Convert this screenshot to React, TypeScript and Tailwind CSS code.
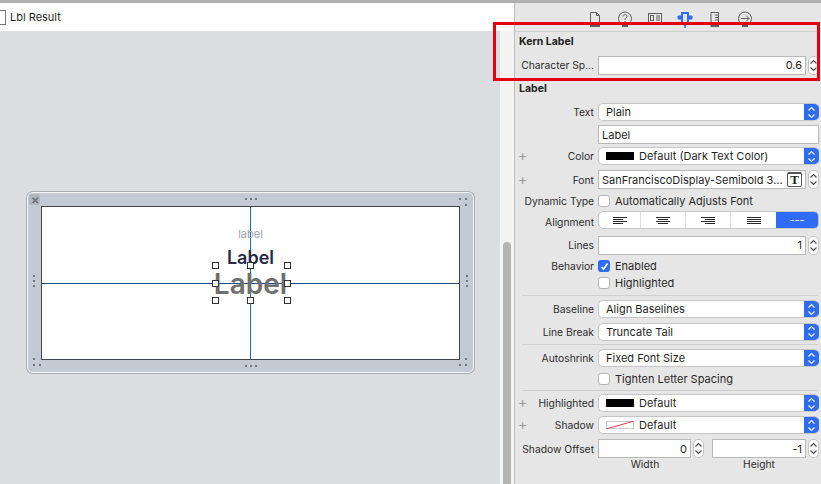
import type { ReactNode } from 'react';

function Chevrons({ color = '#4a4a4a' }: { color?: string }) {
  return (
    <svg width="9" height="15" viewBox="0 0 9 15" fill="none" stroke={color} strokeWidth="1.2">
      <path d="M1.5 5.5 L4.5 2.5 L7.5 5.5" />
      <path d="M1.5 9.5 L4.5 12.5 L7.5 9.5" />
    </svg>
  );
}

function Stepper() {
  return (
    <div className="ml-[2px] flex h-[19px] w-[11px] shrink-0 items-center justify-center rounded-[5px] border border-[#c4c4c4] bg-white">
      <Chevrons />
    </div>
  );
}

function Row({ label, plus, h, labelClass, children }: { label?: string; plus?: boolean; h: number; labelClass?: string; children?: ReactNode }) {
  return (
    <div className="flex items-center pr-[2px]" style={{ height: h }}>
      <div className={`relative w-[79px] shrink-0 whitespace-nowrap text-right text-[10.3px] text-[#2e2e2e] ${labelClass ?? ''}`}>
        {plus && <span className="absolute left-[3px] top-[-2px] text-[14px] leading-[16px] text-[#9a9a9a]">+</span>}
        {label}
      </div>
      <div className="ml-[4px] flex min-w-0 flex-1 items-center">{children}</div>
    </div>
  );
}

function Popup({ children }: { children: ReactNode }) {
  return (
    <div className="flex h-[18px] flex-1 items-center overflow-hidden rounded-[5px] border-t border-b border-l border-[#c6c6c6] bg-white pl-[7px] text-[#1f1f1f]">
      <div className="flex flex-1 items-center gap-[5px] whitespace-nowrap">{children}</div>
      <div className="flex h-[18px] w-[15px] items-center justify-center bg-[#2f6cf6]">
        <Chevrons color="#ffffff" />
      </div>
    </div>
  );
}

function Field({ children, right, className = 'flex-1' }: { children?: ReactNode; right?: boolean; className?: string }) {
  return (
    <div
      className={`flex h-[19px] items-center border border-[#b9b9b9] bg-white px-[3px] text-[#1f1f1f] ${
        right ? 'justify-end' : ''
      } ${className}`}
    >
      {children}
    </div>
  );
}

function Check({ on, label }: { on?: boolean; label: string }) {
  return (
    <div className="flex items-center gap-[5px] whitespace-nowrap text-[#2a2a2a]">
      {on ? (
        <div className="flex h-[12px] w-[12px] items-center justify-center rounded-[3px] bg-[#2f6cf6]">
          <svg width="9" height="9" viewBox="0 0 9 9" fill="none" stroke="white" strokeWidth="1.6">
            <path d="M1.5 5 L3.6 7.2 L7.5 1.5" />
          </svg>
        </div>
      ) : (
        <div className="h-[12px] w-[12px] rounded-[3px] border border-[#b5b5b5] bg-white" />
      )}
      {label}
    </div>
  );
}

function Sep() {
  return <div className="ml-[7px] mr-[3px] h-px shrink-0 bg-[#cfcfcf]" />;
}

function AlignIcon({ mode }: { mode: 'left' | 'center' | 'right' | 'justify' }) {
  const short = { left: 'M0 ', center: 'M2 ', right: 'M4 ', justify: 'M0 ' }[mode];
  const len = mode === 'justify' ? 14 : 10;
  return (
    <svg width="14" height="7" viewBox="0 0 14 7" stroke="#2a2a2a" strokeWidth="1">
      <path d="M0 0.5 H14" />
      <path d={`${short}2.5 h${len}`} />
      <path d="M0 4.5 H14" />
      <path d={`${short}6.5 h${len}`} />
    </svg>
  );
}

function InspectorTabs() {
  const stroke = '#5f5f5f';
  return (
    <div className="flex h-[28px] items-start justify-center gap-[14px] pl-[3px] pt-[7px]">
      <svg width="16" height="19" viewBox="0 0 16 19" fill="none" stroke={stroke}>
        <path d="M3.5 15 V2.5 H9.5 L12.5 5.5 V15 M9.5 2.5 V5.5 H12.5" />
        <path d="M3 16 H13" strokeWidth="2" />
      </svg>
      <svg width="16" height="19" viewBox="0 0 16 19" fill="none" stroke={stroke}>
        <circle cx="8" cy="8.5" r="6.5" />
        <path d="M6 6.5 C6 4 10 4 10 6.5 C10 8 8 8 8 10 M8 11 V12.5" />
        <path d="M5 16 H11" strokeWidth="2" />
      </svg>
      <svg width="16" height="19" viewBox="0 0 16 19" fill="none" stroke={stroke}>
        <rect x="1.5" y="3.5" width="13" height="9" />
        <rect x="3.5" y="5.5" width="3" height="5" />
        <path d="M9 6 H13 M9 8 H13 M9 10 H13" />
      </svg>
      <svg width="16" height="19" viewBox="0 0 16 19" fill="none" stroke="#2f6cf6" strokeWidth="2">
        <path d="M5 3 H11 V12 L8 15 L5 12 Z" />
        <path d="M1 6 H5 V9 H1 Z M11 6 H15 V9 H11 Z" fill="#2f6cf6" strokeWidth="1" />
        <path d="M8 16 V18" strokeWidth="1.5" />
      </svg>
      <svg width="16" height="19" viewBox="0 0 16 19" fill="none" stroke={stroke}>
        <path d="M4 2.5 H11.5 V15 H4 Z M8 5 H11.5 M8 7.5 H11.5 M8 10 H11.5" />
        <path d="M3.5 16 H12" strokeWidth="2" />
      </svg>
      <svg width="16" height="19" viewBox="0 0 16 19" fill="none" stroke={stroke}>
        <circle cx="8" cy="8.5" r="6.5" />
        <path d="M4 8.5 H12 M9 5.5 L12 8.5 L9 11.5" />
        <path d="M5 16 H11" strokeWidth="2" />
      </svg>
    </div>
  );
}

function Inspector() {
  return (
    <div className="flex w-[306px] shrink-0 flex-col bg-[#e6e6e6] text-[11px] leading-[14px]">
      <InspectorTabs />
      <div className="h-px shrink-0 bg-[#cdcdcd]" />
      <div className="flex h-[20px] shrink-0 items-center pl-[4px] text-[10.5px] font-bold text-[#222]">Kern Label</div>
      <Row label="Character Sp..." h={26}>
        <Field right>0.6</Field>
        <Stepper />
      </Row>
      <div className="flex h-[22px] shrink-0 items-center pl-[4px] text-[10.5px] font-bold text-[#222]">Label</div>
      <Row label="Text" h={24}>
        <Popup>Plain</Popup>
      </Row>
      <Row h={21}>
        <Field>Label</Field>
      </Row>
      <Row label="Color" plus h={22}>
        <Popup>
          <span className="h-[8px] w-[28px] bg-black" />
          Default (Dark Text Color)
        </Popup>
      </Row>
      <Row label="Font" plus h={25}>
        <Field className="flex-1 justify-between">
          <span className="whitespace-nowrap">SanFranciscoDisplay-Semibold 3...</span>
          <span className="flex h-[15px] w-[15px] items-center justify-center rounded-[2px] border border-t-2 border-[#555] font-['Liberation_Serif',serif] text-[13px] font-bold">
            T
          </span>
        </Field>
        <Stepper />
      </Row>
      <Row label="Dynamic Type" h={18}>
        <Check label="Automatically Adjusts Font" />
      </Row>
      <Row label="Alignment" labelClass="translate-y-[2px]" h={20}>
        <div className="flex h-[18px] flex-1 overflow-hidden rounded-[5px] border border-[#c6c6c6] bg-white">
          <div className="flex w-[42px] items-center justify-center border-r border-[#ddd]"><AlignIcon mode="left" /></div>
          <div className="flex w-[45px] items-center justify-center border-r border-[#ddd]"><AlignIcon mode="center" /></div>
          <div className="flex w-[45px] items-center justify-center border-r border-[#ddd]"><AlignIcon mode="right" /></div>
          <div className="flex w-[45px] items-center justify-center"><AlignIcon mode="justify" /></div>
          <div className="flex flex-1 items-center justify-center bg-[#2f6cf6] text-white">---</div>
        </div>
      </Row>
      <Row label="Lines" h={30}>
        <Field right>1</Field>
        <Stepper />
      </Row>
      <Row label="Behavior" h={12}>
        <Check on label="Enabled" />
      </Row>
      <Row h={22}>
        <Check label="Highlighted" />
      </Row>
      <div className="h-px shrink-0" />
      <Sep />
      <div className="h-[2px] shrink-0" />
      <Row label="Baseline" h={22}>
        <Popup>Align Baselines</Popup>
      </Row>
      <Row label="Line Break" h={23}>
        <Popup>Truncate Tail</Popup>
      </Row>
      <div className="h-px shrink-0" />
      <Sep />
      <Row label="Autoshrink" h={26}>
        <Popup>Fixed Font Size</Popup>
      </Row>
      <Row h={16}>
        <Check label="Tighten Letter Spacing" />
      </Row>
      <div className="h-[3px] shrink-0" />
      <Sep />
      <div className="h-px shrink-0" />
      <Row label="Highlighted" plus h={22}>
        <Popup>
          <span className="h-[8px] w-[28px] bg-black" />
          Default
        </Popup>
      </Row>
      <Row label="Shadow" plus h={22}>
        <Popup>
          <svg width="28" height="8" viewBox="0 0 28 8" className="bg-white">
            <rect x="0.5" y="0.5" width="27" height="7" fill="none" stroke="#ccc" />
            <path d="M0 8 L28 0" stroke="#e8394a" />
          </svg>
          Default
        </Popup>
      </Row>
      <Row label="Shadow Offset" h={25}>
        <Field right className="w-[93px]">0</Field>
        <Stepper />
        <div className="w-[8px]" />
        <Field right className="flex-1">-1</Field>
        <Stepper />
      </Row>
      <div className="-mt-[4px] flex pl-[83px] text-[10.3px] text-[#2e2e2e]">
        <span className="w-[94px] text-center">Width</span>
        <span className="ml-[20px] w-[94px] text-center">Height</span>
      </div>
    </div>
  );
}

function Grip({ vertical }: { vertical?: boolean }) {
  return (
    <div className={`flex gap-[3px] ${vertical ? 'flex-col' : ''}`}>
      <span className="h-[2px] w-[2px] bg-[#6f7780]" />
      <span className="h-[2px] w-[2px] bg-[#6f7780]" />
      <span className="h-[2px] w-[2px] bg-[#6f7780]" />
    </div>
  );
}

// three dots in an L, the gap cell faces the inside of the frame
function Corner({ className, gap }: { className: string; gap: number }) {
  return (
    <div className={`absolute grid grid-cols-2 gap-[4px] ${className}`}>
      {[0, 1, 2, 3].map((i) => (
        <span key={i} className={`h-[2px] w-[2px] ${i === gap ? '' : 'bg-[#6f7780]'}`} />
      ))}
    </div>
  );
}

function Handle({ x, y }: { x: number; y: number }) {
  return <div className="absolute h-[7px] w-[7px] border border-[#333] bg-white" style={{ left: x, top: y }} />;
}

function Canvas() {
  const handles = [
    [170, 55], [205, 55], [242, 55],
    [170, 73], [242, 73],
    [170, 90], [205, 90], [242, 90],
  ];
  return (
    <div className="flex min-h-0 flex-1 bg-[#dcdde0] pl-[27px] pt-[161px]">
      {/* device frame */}
      <div className="relative h-[181px] w-[447px] rounded-[6px] border border-[#f4f5f6] bg-[#c3cad3] p-[13px] shadow-[0_0_0_1px_#a8adb4]">
        <div className="relative h-[154px] w-[419px] overflow-hidden border border-[#3f4650] bg-white">
          <div className="absolute left-0 right-0 top-[76px] h-px bg-[#1d4f86]" />
          <div className="absolute bottom-0 left-[208px] top-0 w-px bg-[#1d6fb8]" />
          <div className="absolute left-0 right-0 top-[20px] text-center text-[11px] leading-[14px] text-[#a0a4b0]">label</div>
          <div className="absolute left-0 right-0 top-[40px] text-center text-[18px] font-semibold leading-[22px] text-[#262b47]">Label</div>
          <div className="absolute left-0 right-0 top-[59px] text-center text-[28px] font-semibold leading-[37px] text-[#6f6f6f]">Label</div>
          {handles.map(([x, y]) => (
            <Handle key={`${x}-${y}`} x={x} y={y} />
          ))}
        </div>
        <div className="absolute left-[1px] top-[1px] flex h-[11px] w-[11px] items-center justify-center rounded-[2px] bg-[#b0b6be] text-[10px] font-bold leading-none text-[#6a7079]">✕</div>
        <div className="absolute left-[217px] top-[5px]"><Grip /></div>
        <div className="absolute bottom-[5px] left-[217px]"><Grip /></div>
        <div className="absolute left-[5px] top-[82px]"><Grip vertical /></div>
        <div className="absolute right-[5px] top-[82px]"><Grip vertical /></div>
        <Corner gap={2} className="right-[6px] top-[5px]" />
        <Corner gap={1} className="bottom-[6px] left-[5px]" />
        <Corner gap={0} className="bottom-[6px] right-[6px]" />
      </div>
    </div>
  );
}

export default function App() {
  return (
    <div className="relative flex h-[484px] w-[821px] flex-col overflow-hidden bg-white font-['Inter',sans-serif] text-[11px]">
      <div className="h-[3px] shrink-0 bg-[#b0b0b0]" />
      <div className="flex min-h-0 flex-1">
        <div className="flex w-[514px] shrink-0 flex-col">
          <div className="flex h-[28px] shrink-0 items-center bg-white">
            <div className="h-[15px] w-[6px] border border-l-0 border-[#777]" />
            <span className="ml-[4px] pt-px text-[11px] text-[#1f1f1f]">Lbl Result</span>
          </div>
          <div className="flex min-h-0 flex-1">
            <div className="flex w-[500px] shrink-0 flex-col">
              <Canvas />
            </div>
            <div className="flex w-[14px] shrink-0 flex-col bg-[#f4f4f4] pl-[3px] pr-[3px]">
              <div className="mt-[211px] flex-1 rounded-t-[4px] bg-[#b4b4b4]" />
            </div>
          </div>
        </div>
        <div className="w-px shrink-0 bg-[#bdbdbd]" />
        <Inspector />
      </div>
      {/* annotation drawn over the screenshot */}
      <div className="absolute left-[493px] top-[22px] h-[59px] w-[327px] border-[3px] border-[#e3000f]" />
    </div>
  );
}
